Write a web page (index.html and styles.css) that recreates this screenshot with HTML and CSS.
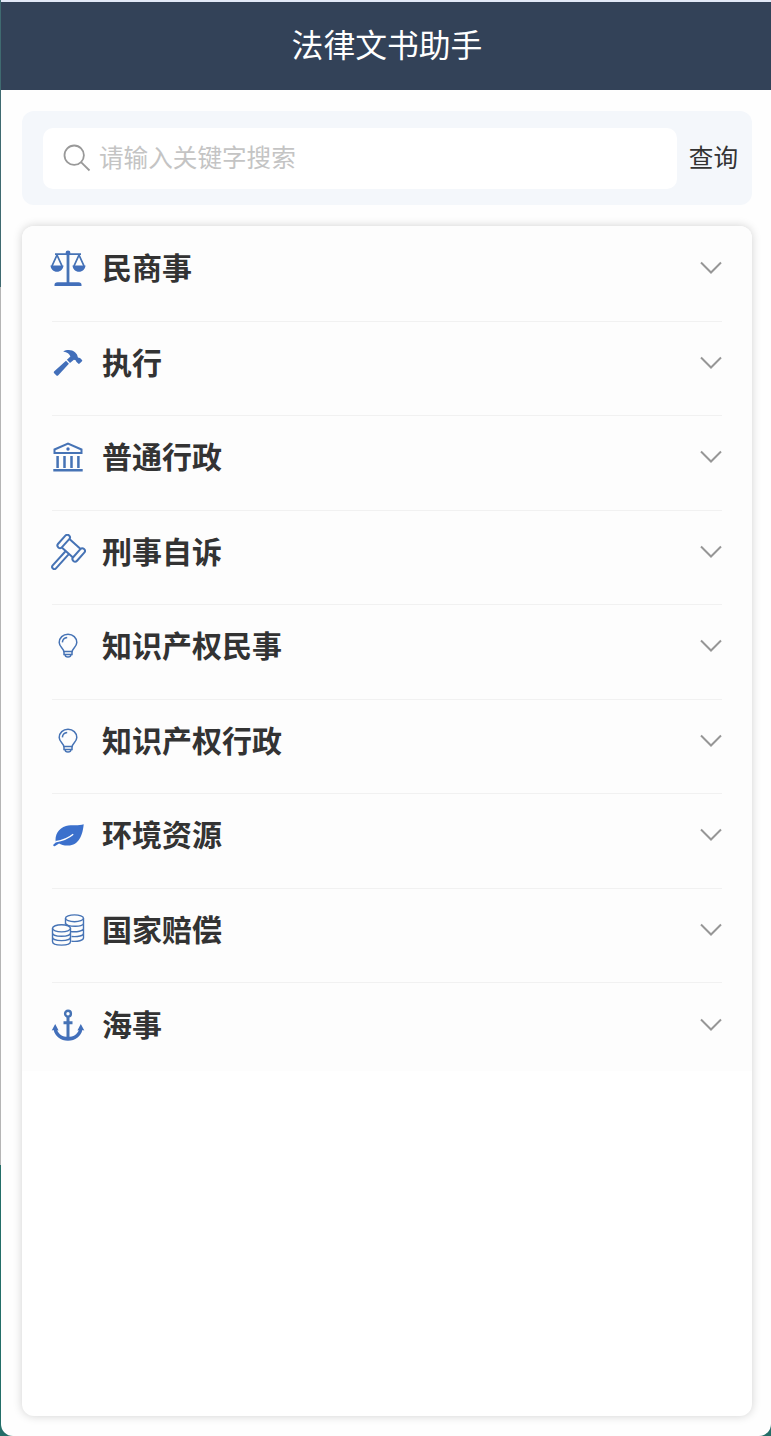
FILE: index.html
```html
<!DOCTYPE html>
<html lang="zh-CN">
<head>
    <meta charset="UTF-8">
    <meta name="viewport" content="width=device-width, initial-scale=1.0">
    <title>法律文书助手</title>
    <link rel="stylesheet" href="styles.css">
</head>
<body>
    <div class="app">
        <div class="header">法律文书助手</div>

        <div class="search">
            <div class="search-box">
                <svg class="search-icon" viewBox="0 0 28 28"><circle cx="11.2" cy="11.2" r="9.7"/><path d="M18 18.2L26.5 26.5"/></svg>
                <span class="placeholder">请输入关键字搜索</span>
            </div>
            <div class="search-btn">查询</div>
        </div>

        <div class="panel">
            <div class="list">
                <div class="item">
                    <svg class="icon" viewBox="0 0 36 36">
                        <path class="line" stroke-width="1.8" d="M5 4.2H31M7 5L2 16M7 5L12 16M29 5L24 16M29 5L34 16"/>
                        <path class="line" stroke-width="2.8" d="M18 2V33"/>
                        <circle class="fill" cx="18" cy="3" r="2.4"/>
                        <path class="fill" d="M.5 15.5H13.5C13.3 19 10.5 21.8 7 21.8S.7 19 .5 15.5ZM22.5 15.5H35.5C35.3 19 32.5 21.8 29 21.8S22.7 19 22.5 15.5ZM4.5 36V34.8C4.5 33 5.5 32.2 7.5 32.2H28.5C30.5 32.2 31.5 33 31.5 34.8V36Z"/>
                    </svg>
                    <span class="name">民商事</span>
                    <svg class="arrow" viewBox="0 0 22 14"><path d="M1 1.5L11 11.5L21 1.5"/></svg>
                </div>
                <div class="item">
                    <svg class="icon" viewBox="0 0 36 36">
                        <path class="fill" d="M16 15.8L18.9 18.7L8.3 30.2C7.6 31 6.9 31 6.2 30.3L4.2 28.3C3.6 27.7 3.6 27 4.3 26.3ZM16.9 14.8L20.4 11.6C19.5 8.9 17.3 7.1 13.2 6.4C17 4.1 22 4.5 25 7.2C26.7 8.7 27.6 10.2 27.8 12.3C28.7 13 29.5 12.9 30.3 13.2L32 14.9C32.4 15.3 32.4 15.8 32 16.2L29.6 18.6C29.2 19 28.6 19 28.2 18.6L26.3 16.7C26.2 15.5 25.3 14.7 23.9 14.7L20 18Z"/>
                    </svg>
                    <span class="name">执行</span>
                    <svg class="arrow" viewBox="0 0 22 14"><path d="M1 1.5L11 11.5L21 1.5"/></svg>
                </div>
                <div class="item">
                    <svg class="icon" viewBox="0 0 36 36">
                        <path class="line" stroke-width="2" d="M4.5 14V10.5L18 4.5L31.5 10.5V14Z"/>
                        <circle class="fill" cx="18" cy="10" r="1.7"/>
                        <path class="line" stroke-width="2.5" d="M7.6 17V29M14.5 17V29M21.5 17V29M28.4 17V29M3.3 31.2H32.7"/>
                    </svg>
                    <span class="name">普通行政</span>
                    <svg class="arrow" viewBox="0 0 22 14"><path d="M1 1.5L11 11.5L21 1.5"/></svg>
                </div>
                <div class="item">
                    <svg class="icon" viewBox="0 0 36 36">
                        <g class="line" stroke-width="2" transform="translate(21.2 14.2) rotate(42)">
                            <rect x="-12.7" y="-8" width="5.2" height="16" rx="2.6"/>
                            <rect x="7.5" y="-8" width="5.2" height="16" rx="2.6"/>
                            <path d="M-7.5 -5.7H7.5M-7.5 5.7H7.5M-2.2 5.7V25.2C-2.2 28 2.2 28 2.2 25.2V5.7"/>
                        </g>
                    </svg>
                    <span class="name">刑事自诉</span>
                    <svg class="arrow" viewBox="0 0 22 14"><path d="M1 1.5L11 11.5L21 1.5"/></svg>
                </div>
                <div class="item">
                    <svg class="icon" viewBox="0 0 36 36">
                        <path class="line" stroke-width="1.5" d="M13.8 23.5C13.8 20.8 9.2 18.8 9.2 14.6C9.2 9.7 13 6.3 18 6.3S26.8 9.7 26.8 14.6C26.8 18.8 22.2 20.8 22.2 23.5ZM14 23.5V26.5H22V23.5M15 26.8C15.3 29.8 20.7 29.8 21 26.8M12.4 14.4C12.5 11.5 14.5 9.8 17.2 9.5"/>
                    </svg>
                    <span class="name">知识产权民事</span>
                    <svg class="arrow" viewBox="0 0 22 14"><path d="M1 1.5L11 11.5L21 1.5"/></svg>
                </div>
                <div class="item">
                    <svg class="icon" viewBox="0 0 36 36">
                        <path class="line" stroke-width="1.5" d="M13.8 23.5C13.8 20.8 9.2 18.8 9.2 14.6C9.2 9.7 13 6.3 18 6.3S26.8 9.7 26.8 14.6C26.8 18.8 22.2 20.8 22.2 23.5ZM14 23.5V26.5H22V23.5M15 26.8C15.3 29.8 20.7 29.8 21 26.8M12.4 14.4C12.5 11.5 14.5 9.8 17.2 9.5"/>
                    </svg>
                    <span class="name">知识产权行政</span>
                    <svg class="arrow" viewBox="0 0 22 14"><path d="M1 1.5L11 11.5L21 1.5"/></svg>
                </div>
                <div class="item">
                    <svg class="icon" viewBox="0 0 36 36">
                        <path class="fill leaf" d="M33.7 7.2C32.8 17.5 29 28.3 18 28.6C14.5 28.7 11 28 9 26.6C7.6 27.2 5.8 29 4.6 29.2C3.3 29.4 2.9 28.3 3.5 27.6C4.3 26.5 5 26.2 5.8 25.4C4.5 18 8.5 11.5 16 9.1C22 7.3 29 9 33.7 7.2Z"/>
                        <path class="vein" d="M5.5 24.8C12 23.8 18.5 21.3 23.2 17.3"/>
                    </svg>
                    <span class="name">环境资源</span>
                    <svg class="arrow" viewBox="0 0 22 14"><path d="M1 1.5L11 11.5L21 1.5"/></svg>
                </div>
                <div class="item">
                    <svg class="icon" viewBox="0 0 36 36">
                        <g class="line" stroke-width="1.4">
                            <ellipse cx="24.5" cy="6.3" rx="9" ry="3.4"/>
                            <path d="M15.5 6.3V12.5M33.5 6.3V26C33.5 28.2 28 30 21.5 29.2M15.5 11.2C17 15 33.5 15.6 33.5 11.2M20.5 19.6C27 20.3 33.5 19 33.5 16.2M21.5 24.5C28 25 33.5 23.8 33.5 21.2"/>
                            <ellipse cx="11.5" cy="16.3" rx="9" ry="3.6"/>
                            <path d="M2.5 16.3V29.5C2.5 34.3 20.5 34.3 20.5 29.5V16.3M2.5 20.7C2.5 25.4 20.5 25.4 20.5 20.7M2.5 25.1C2.5 29.8 20.5 29.8 20.5 25.1"/>
                        </g>
                    </svg>
                    <span class="name">国家赔偿</span>
                    <svg class="arrow" viewBox="0 0 22 14"><path d="M1 1.5L11 11.5L21 1.5"/></svg>
                </div>
                <div class="item">
                    <svg class="icon" viewBox="0 0 36 36">
                        <circle class="line" stroke-width="2.4" cx="18" cy="6.7" r="2.9"/>
                        <path class="line" stroke-width="3" d="M18 9.5V31M13.5 15.8H22.5"/>
                        <path class="fill" d="M5.2 17L8.6 23.4L7.2 23.2C9 27.5 12.5 29.8 18 29.8S27 27.5 28.8 23.2L27.4 23.4L30.8 17L34.3 23.4L32.4 23.1C30.5 29.8 25.5 33.7 18 33.7S5.5 29.8 3.6 23.1L1.7 23.4Z"/>
                    </svg>
                    <span class="name">海事</span>
                    <svg class="arrow" viewBox="0 0 22 14"><path d="M1 1.5L11 11.5L21 1.5"/></svg>
                </div>
            </div>
        </div>
    </div>
</body>
</html>
```
FILE: styles.css
```css
* {
    box-sizing: border-box;
}
html {
    background: linear-gradient(#3f6a70 0, #3f6a70 287px, #b5b5b5 287px, #b5b5b5 1165px, #236e68 1165px);
}
body {
    margin: 0;
    font-family: "Noto Sans CJK SC", sans-serif;
    color: #333;
}
.app {
    display: flex;
    flex-direction: column;
    height: 1436px;
    margin-left: 1px;
    padding-bottom: 20px;
    background: #fefefe;
    border-top: 2px solid #e2e9f7;
    border-radius: 0 0 12px 12px;
}
.header {
    height: 88px;
    line-height: 82px;
    padding-left: 2px;
    background: #334258;
    color: #fff;
    font-size: 31.8px;
    text-align: center;
}
.search {
    display: flex;
    align-items: center;
    height: 94px;
    margin: 21px 19px 0 21px;
    padding: 0 14px 0 21px;
    background: #f4f7fb;
    border-radius: 12px;
}
.search-box {
    display: flex;
    align-items: center;
    flex: 1;
    height: 61px;
    padding-left: 20px;
    background: #fff;
    border-radius: 10px;
}
.search-icon {
    width: 28px;
    height: 28px;
    margin-right: 8px;
    fill: none;
    stroke: #999;
    stroke-width: 1.8;
}
.placeholder {
    padding-bottom: 4px;
    font-size: 24.6px;
    line-height: 36px;
    color: #c4c4c4;
}
.search-btn {
    margin-left: 12px;
    padding-bottom: 4px;
    font-size: 24.6px;
    line-height: 36px;
}
.panel {
    flex: 1;
    margin: 21px 19px 0 21px;
    background: #fff;
    border-radius: 12px;
    box-shadow: 0 0 10px rgba(0, 0, 0, 0.18);
    overflow: hidden;
}
.list {
    height: 845px;
    padding: 1px 30px 0;
    background: #fdfdfd;
}
.item {
    display: flex;
    align-items: center;
    height: 94.5px;
    padding-bottom: 11px;
    border-bottom: 1px solid #f1f1f1;
}
.item:last-child {
    height: 88px;
    padding-bottom: 5px;
    border-bottom: none;
}
.icon {
    width: 36px;
    height: 36px;
    margin-left: -2.5px;
    margin-right: 16.5px;
}
.line {
    fill: none;
    stroke: #4673b5;
}
.fill {
    fill: #426fba;
}
.leaf {
    fill: #3b70cc;
}
.vein {
    fill: none;
    stroke: #fff;
    stroke-width: 1.4;
}
.name {
    flex: 1;
    padding-bottom: 4px;
    font-size: 30px;
    font-weight: bold;
    line-height: 44px;
}
.arrow {
    width: 22px;
    height: 14px;
    margin-right: 0.5px;
    fill: none;
    stroke: #969696;
    stroke-width: 2;
}
```
